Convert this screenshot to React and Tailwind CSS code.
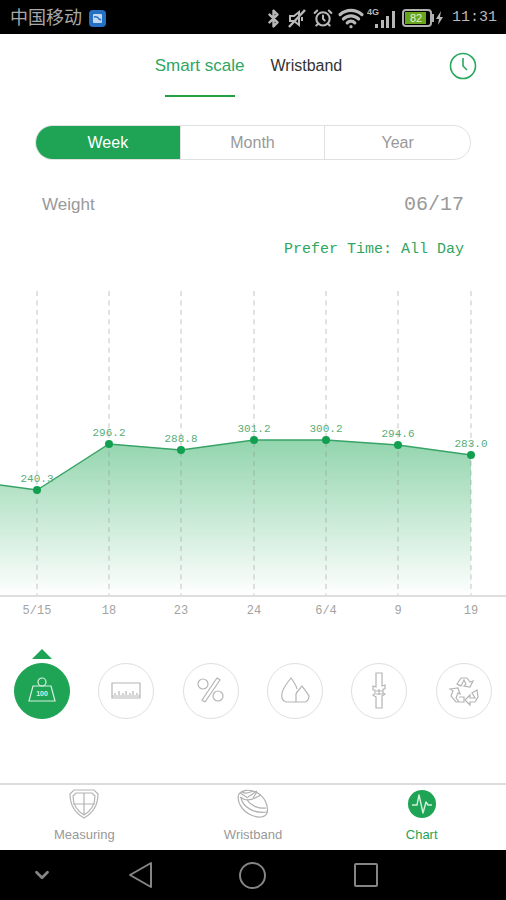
import { useState } from 'react';
import { Bluetooth, Wifi, AlarmClock, ChevronDown } from 'lucide-react';
import { clsx } from 'clsx';

const POINTS = [
  { x: 37, y: 200, value: '240.3', day: '5/15' },
  { x: 109, y: 154, value: '296.2', day: '18' },
  { x: 181, y: 160, value: '288.8', day: '23' },
  { x: 254, y: 150, value: '301.2', day: '24' },
  { x: 326, y: 150, value: '300.2', day: '6/4' },
  { x: 398, y: 155, value: '294.6', day: '9' },
  { x: 471, y: 165, value: '283.0', day: '19' },
];
const BASE = 306;

function StatusBar() {
  return (
    <div className="flex h-[34px] shrink-0 items-center bg-black pl-[10px] pr-[9px] pt-[2px] text-[#b8b8b8]">
      <span className="text-[18px] leading-6 text-[#a8a8a8]">中国移动</span>
      <svg className="ml-[7px]" width="17" height="17" viewBox="0 0 17 17">
        <rect width="17" height="17" rx="4" fill="#2470c4" />
        <rect x="4" y="4" width="9" height="9" rx="1" fill="#c3d8ef" />
        <path d="M5 7c3-1 4 0 5 2l2 1" fill="none" stroke="#2470c4" strokeWidth="1.500" />
      </svg>

      <div className="ml-auto flex items-center">
        <Bluetooth size={19} strokeWidth={3} />
        <svg className="ml-[5px]" width="18" height="19" viewBox="0 0 18 19" fill="none" stroke="currentColor" strokeWidth="2">
          <path d="M2 7h4l5-4v13l-5-4H2z" />
          <path d="M17 1L1 18" strokeWidth="2.500" />
          <path d="M14 8v4" />
        </svg>
        <AlarmClock className="ml-[7px]" size={20} strokeWidth={2.5} />
        <Wifi className="ml-[5px]" size={26} strokeWidth={3} />
        <svg className="ml-[3px]" width="30" height="22" viewBox="0 0 30 22" fill="currentColor">
          <text x="0" y="8" fontSize="9" fontWeight="bold">4G</text>
          <rect x="8" y="17" width="3" height="4" />
          <rect x="14" y="13" width="3" height="8" />
          <rect x="19" y="9" width="3" height="12" />
          <rect x="25" y="4" width="3" height="17" />
        </svg>
        <svg className="ml-[5px]" width="42" height="18" viewBox="0 0 42 18">
          <rect x="1" y="1" width="28" height="16" rx="3" fill="#000" stroke="#b0b0b0" strokeWidth="2" />
          <path d="M30 5h2v8h-2" fill="#b0b0b0" />
          <rect x="3" y="3" width="21" height="12" fill="#69a51c" />
          <text x="14" y="13" fontSize="11" fill="#e4efd8" textAnchor="middle">82</text>
          <path d="M39 2l-5 8h3l-1 6 5-8h-3z" fill="#b8b8b8" />
        </svg>
        <span className="ml-[8px] font-['Liberation_Mono',monospace] text-[15px] leading-5">11:31</span>
      </div>
    </div>
  );
}

function WeightChart() {
  const line = ['0,195', ...POINTS.map(p => `${p.x},${p.y}`)].join(' ');
  return (
    <svg className="mt-[26px] block w-full" viewBox="0 0 506 330" fontFamily="'Liberation Mono', monospace">
      <defs>
        <linearGradient id="fill" gradientUnits="userSpaceOnUse" x1="0" y1="150" x2="0" y2={BASE}>
          <stop offset="0" stopColor="#92d5ad" />
          <stop offset="1" stopColor="#ffffff" />
        </linearGradient>
      </defs>
      <polygon points={`${line} 471,${BASE} 0,${BASE}`} fill="url(#fill)" />
      {POINTS.map(p => (
        <line key={p.day} x1={p.x} x2={p.x} y1="1" y2={BASE} stroke="#8c8c8c" strokeOpacity="0.5" strokeDasharray="5 4.450" />
      ))}
      <line x1="0" x2="506" y1={BASE} y2={BASE} stroke="#dedede" strokeWidth="2" />
      <polyline points={line} fill="none" stroke="#37a366" strokeWidth="1.300" />
      {POINTS.map(p => (
        <g key={p.day} textAnchor="middle">
          <circle cx={p.x} cy={p.y} r="4" fill="#12a050" />
          <text x={p.x} y={p.y - 8} fontSize="11" fill="#58ad79">{p.value}</text>
          <text x={p.x} y="324" fontSize="12" fill="#a3a3a3">{p.day}</text>
        </g>
      ))}
    </svg>
  );
}

const METRICS = [
  {
    name: 'Weight',
    art: (
      <>
        <circle cx="14" cy="5" r="4" />
        <path d="M5 9h18l4 15H1z" />
        <text x="14" y="19" fontSize="7" fontWeight="bold" textAnchor="middle" fill="currentColor" stroke="none">100</text>
      </>
    ),
  },
  { name: 'BMI', art: <><path d="M0 6h28v15H0z" /><path d="M0 19h28M3 18v-2M7 18v-4M11 18v-2M14 18v-4M18 18v-2M21 18v-4M25 18v-2" /></> },
  {
    name: 'Body fat',
    art: (
      <>
        <circle cx="6" cy="7" r="5" />
        <circle cx="21" cy="19" r="5" />
        <path d="M20 1l3 2L8 25l-3-2z" />
      </>
    ),
  },
  { name: 'Water', art: <><path d="M15 25H5c-3-1-5-4-4-9 1-5 5-10 9-15 3 4 5 7 6 11" /><path d="M15 25V17c1-3 4-5 6-8 2 3 5 6 7 10 0 3-2 6-4 6z" /></> },
  { name: 'Bone', art: <path d="M11-4h6v13l3-1v4h-2v4l2 1-3 2v12h-6V20l-3-2 2-1v-4H8V9l3 1zM11 14h7M11 17h7M14 12v6" /> },
  {
    name: 'Metabolism',
    art: (
      <>
        <path d="M7 7l4-6h6l3 4 3-1-3 6-6-1 2-2-2-4-3 6z" />
        <path d="M7 7l4 2" />
        <path d="M0 12l8-1 2 6-2-1-2 5 3 4H6L1 19l2-5zM9 20h5v5H9" />
        <path d="M27 13l1 7-3 5h-5v3l-5-5 5-5v3h5l-3-5z" />
      </>
    ),
  },
];

function MetricPicker() {
  const [active, setActive] = useState('Weight');
  return (
    <div className="mt-[29px] grid grid-cols-6">
      {METRICS.map(m => (
        <div key={m.name} className="flex flex-col items-center gap-[4px]">
          <svg width="20" height="10" viewBox="0 0 20 10" className={clsx(m.name !== active && 'invisible')}>
            <path d="M10 0l10 10H0z" fill="#1fa355" />
          </svg>
          <button
            aria-label={m.name}
            onClick={() => setActive(m.name)}
            className={clsx(
              'flex size-[56px] items-center justify-center rounded-full border',
              m.name === active ? 'border-[#1fa355] bg-[#1fa355] text-[#d7f1e1]' : 'border-[#dfdfdf] bg-white text-[#b5b5b5]'
            )}
          >
            <svg className="overflow-visible" width="28" height="28" viewBox="0 0 28 28" fill="none" stroke="currentColor" strokeWidth="1.200">
              {m.art}
            </svg>
          </button>
        </div>
      ))}
    </div>
  );
}

function BottomTabs() {
  const tab = 'flex flex-col items-center gap-[6px] text-[13px] leading-5';
  return (
    <nav className="mt-auto grid h-[67px] shrink-0 grid-cols-3 border-t-2 border-[#dcdcdc] pt-[4px] text-[#999]">
      <a href="#measuring" className={tab}>
        <svg width="30" height="30" viewBox="0 0 30 30" fill="none" stroke="#b4b4b4" strokeWidth="1.200">
          <path d="M5 1h20l4 4c0 12-5 19-14 24C6 24 1 17 1 5z" />
          <path d="M7 4h16l3 3c0 9-4 15-11 19C8 22 4 16 4 7zM15 4v22M4 15h22" />
        </svg>
        Measuring
      </a>
      <a href="#wristband" className={tab}>
        <svg width="32" height="30" viewBox="0 0 32 30" fill="none" stroke="#b0b0b0" strokeWidth="1.200">
          <path d="M2 5c3-4 10-5 17-2 8 4 13 13 11 21-2 5-9 5-16 2C5 22-1 12 2 5z" />
          <path d="M3 8c4 3 9 4 15 1M5 3c3 2 7 1 11-1M11 8l9-6M18 9l6-3M4 9c2 9 13 16 26 14M10 11c4 6 12 9 19 8M3 4l8 5M20 3l-4 6" />
        </svg>
        Wristband
      </a>
      <a href="#chart" className={clsx(tab, 'text-[#1fa355]')}>
        <svg width="30" height="30" viewBox="0 0 30 30" fill="none">
          <circle cx="15" cy="15" r="14" fill="#1fa355" />
          <path d="M5 16h5l2-10 4 18 3-11 2 3h4" stroke="#d4f0df" strokeWidth="1.400" strokeLinejoin="round" />
        </svg>
        Chart
      </a>
    </nav>
  );
}

function NavBar() {
  return (
    <div className="grid h-[50px] shrink-0 grid-cols-[84px_1fr_1fr_1fr_84px] place-items-center bg-black text-[#858585]">
      <button aria-label="Hide"><ChevronDown size={22} strokeWidth={3} /></button>
      <button aria-label="Back">
        <svg width="26" height="28" viewBox="0 0 26 28" fill="none" stroke="currentColor" strokeWidth="2">
          <path d="M24 2v24L3 14z" strokeLinejoin="round" />
        </svg>
      </button>
      <button aria-label="Home" className="size-[27px] rounded-full border-2 border-current" />
      <button aria-label="Recent" className="size-[24px] rounded-[2px] border-2 border-current" />
    </div>
  );
}

export default function App() {
  const [range, setRange] = useState('Week');
  return (
    <div className="flex min-h-screen flex-col bg-white font-['Liberation_Sans','Noto_Sans_CJK_SC',sans-serif]">
      <StatusBar />

      <header className="grid grid-cols-[1fr_auto_1fr] items-start pl-[20px] pr-[29px] pt-[18px]">
        <div />
        <div className="flex gap-[26px] leading-7">
          <button className="flex flex-col items-center gap-[15px] text-[17px] text-[#2fa662]">
            Smart scale
            <span className="h-[2px] w-[70px] bg-[#22a043]" />
          </button>
          <button className="self-start text-[16px] text-[#333]">Wristband</button>
        </div>
        <button aria-label="History" className="justify-self-end">
          <svg width="28" height="28" viewBox="0 0 28 28" fill="none" stroke="#2aa75e" strokeWidth="1.600">
            <circle cx="14" cy="14" r="12.500" />
            <path d="M14 6v8l4 4" />
          </svg>
        </button>
      </header>

      <div className="mx-[35px] mt-[28px] grid h-[35px] grid-cols-3 divide-x divide-[#e0e0e0] overflow-hidden rounded-full border border-[#e0e0e0]">
        {['Week', 'Month', 'Year'].map(r => (
          <button
            key={r}
            onClick={() => setRange(r)}
            className={clsx('text-[16px] leading-6', r === range ? 'bg-[#1fa355] text-white' : 'text-[#999]')}
          >
            {r}
          </button>
        ))}
      </div>

      <div className="mt-[31px] flex items-center justify-between px-[42px] leading-7 text-[#999]">
        <h1 className="text-[17px]">Weight</h1>
        <span className="font-['Liberation_Mono',monospace] text-[20px]">06/17</span>
      </div>
      <button className="mr-[42px] mt-[17px] self-end font-['Liberation_Mono',monospace] text-[15px] leading-7 text-[#2fa662]">
        Prefer Time: All Day
      </button>

      <WeightChart />
      <MetricPicker />
      <BottomTabs />
      <NavBar />
    </div>
  );
}
